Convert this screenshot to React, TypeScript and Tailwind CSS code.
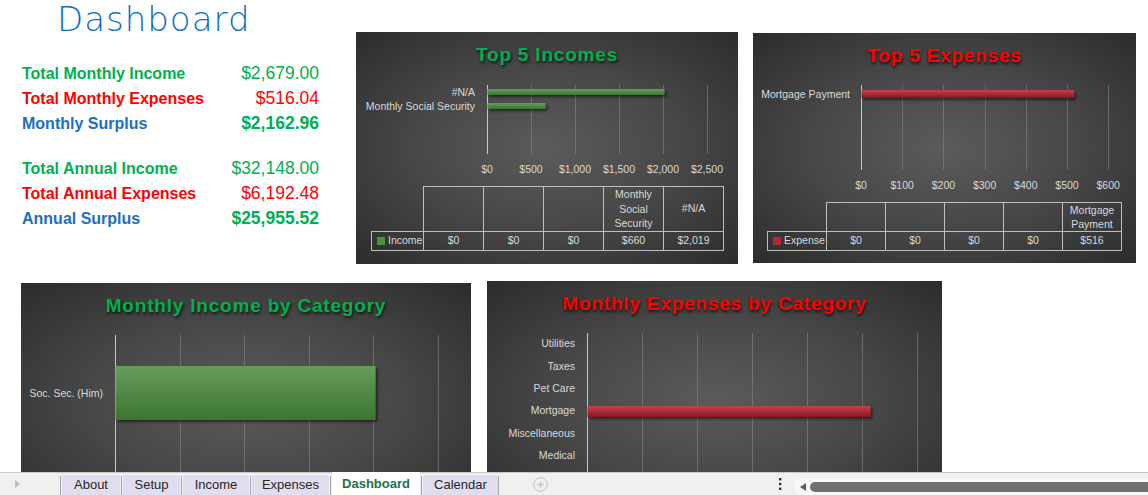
import React from "react";

const SVG_FONT = '"Liberation Sans", Arial, sans-serif';
const LABEL = "#d9d9d9";

function Defs({ id }: { id: string }) {
  return (
    <defs>
      <linearGradient id={`g-${id}`} x1="0" y1="0" x2="0" y2="1">
        <stop offset="0%" stopColor="#679c5d" />
        <stop offset="100%" stopColor="#3c7631" />
      </linearGradient>
      <linearGradient id={`r-${id}`} x1="0" y1="0" x2="0" y2="1">
        <stop offset="0%" stopColor="#c2434f" />
        <stop offset="100%" stopColor="#8c1522" />
      </linearGradient>
      <filter id={`s-${id}`} x="-10%" y="-50%" width="130%" height="250%">
        <feDropShadow dx="2" dy="2" stdDeviation="1.6" floodColor="#000" floodOpacity="0.55" />
      </filter>
    </defs>
  );
}

function Grid({ xs, y1, y2, axis }: { xs: number[]; y1: number; y2: number; axis: number }) {
  return (
    <g>
      {xs.map((x) => (
        <line key={x} x1={Math.round(x) + 0.5} x2={Math.round(x) + 0.5} y1={y1} y2={y2} stroke="#8a8a8a" strokeOpacity="0.55" strokeWidth="1" />
      ))}
      <line x1={axis + 0.5} x2={axis + 0.5} y1={y1} y2={y2} stroke="#c8c8c8" strokeWidth="1" />
    </g>
  );
}

function T({ x, y, children, anchor = "end" }: { x: number; y: number; children: React.ReactNode; anchor?: "end" | "middle" | "start" }) {
  return (
    <text x={x} y={y} textAnchor={anchor} dominantBaseline="central" fontFamily={SVG_FONT} fontSize="10.5" fill={LABEL}>
      {children}
    </text>
  );
}

function Title({ children, color }: { children: React.ReactNode; color: string }) {
  return (
    <div className="h-[47px] shrink-0 flex items-center justify-center">
      <div
        className={`text-[19px] font-bold tracking-[0.8px] ${color} [text-shadow:1px_2px_3px_rgba(0,0,0,0.75)]`}
      >
        {children}
      </div>
    </div>
  );
}

const PANEL =
  "flex flex-col shrink-0 overflow-hidden bg-[radial-gradient(ellipse_at_50%_50%,#5b5b5b_0%,#474747_50%,#2c2c2c_100%)]";

function Legend({ color, label }: { color: string; label: string }) {
  return (
    <div className="flex items-center pl-[5px] gap-[3px]">
      <span className={`inline-block w-[8px] h-[8px] ${color}`} />
      <span>{label}</span>
    </div>
  );
}

const CELL = "border border-[#bfbfbf] text-center font-normal p-0";

function Top5Incomes() {
  const xs = [175, 219, 263, 307, 351];
  const xl = ["$0", "$500", "$1,000", "$1,500", "$2,000", "$2,500"];
  return (
    <div className={`${PANEL} w-[382px] h-[232px] mt-[32px]`}>
      <Title color="text-[#00b050]">Top 5 Incomes</Title>
      <svg width="382" height="107" viewBox="0 47 382 107" className="shrink-0 block">
        <Defs id="a" />
        <Grid xs={xs} y1={53} y2={122} axis={131} />
        <rect x={131.5} y={57} width={177} height={6} fill="url(#g-a)" filter="url(#s-a)" />
        <rect x={131.5} y={71} width={58} height={6} fill="url(#g-a)" filter="url(#s-a)" />
        <T x={119} y={60}>#N/A</T>
        <T x={119} y={74}>Monthly Social Security</T>
        {xl.map((l, i) => (
          <T key={l} x={131 + i * 44} y={137} anchor="middle">
            {l}
          </T>
        ))}
      </svg>
      <table className="ml-[15px] w-[352px] table-fixed border-collapse text-[10.5px] text-[#d9d9d9]">
        <colgroup>
          <col className="w-[52px]" />
          <col className="w-[60px]" />
          <col className="w-[60px]" />
          <col className="w-[60px]" />
          <col className="w-[60px]" />
          <col className="w-[60px]" />
        </colgroup>
        <tbody>
          <tr className="h-[44px]">
            <td className="border-0 p-0" />
            <td className={CELL} />
            <td className={CELL} />
            <td className={CELL} />
            <td className={`${CELL} leading-[14.5px]`}>
              Monthly
              <br />
              Social
              <br />
              Security
            </td>
            <td className={CELL}>#N/A</td>
          </tr>
          <tr className="h-[19px]">
            <td className="border border-[#bfbfbf] p-0">
              <Legend color="bg-[#4e8f44]" label="Income" />
            </td>
            <td className={CELL}>$0</td>
            <td className={CELL}>$0</td>
            <td className={CELL}>$0</td>
            <td className={CELL}>$660</td>
            <td className={CELL}>$2,019</td>
          </tr>
        </tbody>
      </table>
    </div>
  );
}

function Top5Expenses() {
  const xs = [1, 2, 3, 4, 5, 6].map((i) => 108 + i * 41.2);
  const xl = ["$0", "$100", "$200", "$300", "$400", "$500", "$600"];
  return (
    <div className={`${PANEL} w-[383px] h-[230px] mt-[33px] ml-[15px]`}>
      <Title color="text-[#ff0000]">Top 5 Expenses</Title>
      <svg width="383" height="122" viewBox="0 47 383 122" className="shrink-0 block">
        <Defs id="b" />
        <Grid xs={xs} y1={52} y2={137} axis={108} />
        <rect x={108.5} y={57} width={212.6} height={8} fill="url(#r-b)" filter="url(#s-b)" />
        <T x={97} y={61}>Mortgage Payment</T>
        {xl.map((l, i) => (
          <T key={l} x={108 + i * 41.2} y={152} anchor="middle">
            {l}
          </T>
        ))}
      </svg>
      <table className="ml-[14px] w-[354px] table-fixed border-collapse text-[10.5px] text-[#d9d9d9]">
        <colgroup>
          <col className="w-[59px]" />
          <col className="w-[59px]" />
          <col className="w-[59px]" />
          <col className="w-[59px]" />
          <col className="w-[59px]" />
          <col className="w-[59px]" />
        </colgroup>
        <tbody>
          <tr className="h-[29px]">
            <td className="border-0 p-0" />
            <td className={CELL} />
            <td className={CELL} />
            <td className={CELL} />
            <td className={CELL} />
            <td className={`${CELL} leading-[14px]`}>
              Mortgage
              <br />
              Payment
            </td>
          </tr>
          <tr className="h-[19px]">
            <td className="border border-[#bfbfbf] p-0">
              <Legend color="bg-[#b02a38]" label="Expense" />
            </td>
            <td className={CELL}>$0</td>
            <td className={CELL}>$0</td>
            <td className={CELL}>$0</td>
            <td className={CELL}>$0</td>
            <td className={CELL}>$516</td>
          </tr>
        </tbody>
      </table>
    </div>
  );
}

function IncomeByCategory() {
  const xs = [1, 2, 3, 4, 5].map((i) => 94 + i * 64.6);
  return (
    <div className={`${PANEL} w-[450px] h-[237px] mt-[2px] ml-[21px]`}>
      <Title color="text-[#00b050]">Monthly Income by Category</Title>
      <svg width="450" height="190" viewBox="0 47 450 190" className="shrink-0 block">
        <Defs id="c" />
        <Grid xs={xs} y1={52} y2={237} axis={94} />
        <rect x={94.5} y={83} width={260} height={54} fill="url(#g-c)" filter="url(#s-c)" />
        <T x={82} y={110}>Soc. Sec. (Him)</T>
      </svg>
    </div>
  );
}

function ExpensesByCategory() {
  const xs = [1, 2, 3, 4, 5, 6].map((i) => 100 + i * 55);
  const cats: [string, number][] = [
    ["Utilities", 62],
    ["Taxes", 85],
    ["Pet Care", 107],
    ["Mortgage", 129],
    ["Miscellaneous", 152],
    ["Medical", 174],
  ];
  return (
    <div className={`${PANEL} w-[455px] h-[237px] ml-[16px]`}>
      <Title color="text-[#ff0000]">Monthly Expenses by Category</Title>
      <svg width="455" height="190" viewBox="0 47 455 190" className="shrink-0 block">
        <Defs id="d" />
        <Grid xs={xs} y1={52} y2={237} axis={100} />
        <rect x={100.5} y={125} width={283} height={11} fill="url(#r-d)" filter="url(#s-d)" />
        {cats.map(([c, y]) => (
          <T key={c} x={88} y={y}>
            {c}
          </T>
        ))}
      </svg>
    </div>
  );
}

type Row = { label: string; value: string; lc: string; vc: string };

function SummaryRows({ rows }: { rows: Row[] }) {
  return (
    <div className="flex flex-col">
      {rows.map((r) => (
        <div key={r.label} className="h-[25px] flex items-center justify-between">
          <span className={`text-[16px] font-bold ${r.lc}`}>{r.label}</span>
          <span className={`text-[17.5px] ${r.vc}`}>{r.value}</span>
        </div>
      ))}
    </div>
  );
}

function Summary() {
  const green = "text-[#00b050]";
  const red = "text-[#ff0000]";
  const blue = "text-[#1b6ec2]";
  return (
    <div className="w-[356px] shrink-0 pl-[22px] pr-[37px]">
      <div className="h-[61px] pt-[2px] pl-[35px] text-[34px] leading-[35px] font-extralight text-[#0b6fc6] font-['DejaVu_Sans',sans-serif] tracking-[1px]">
        Dashboard
      </div>
      <SummaryRows
        rows={[
          { label: "Total Monthly Income", value: "$2,679.00", lc: green, vc: green },
          { label: "Total Monthly Expenses", value: "$516.04", lc: red, vc: red },
          { label: "Monthly Surplus", value: "$2,162.96", lc: blue, vc: `${green} font-bold` },
        ]}
      />
      <div className="h-[20px]" />
      <SummaryRows
        rows={[
          { label: "Total Annual Income", value: "$32,148.00", lc: green, vc: green },
          { label: "Total Annual Expenses", value: "$6,192.48", lc: red, vc: red },
          { label: "Annual Surplus", value: "$25,955.52", lc: blue, vc: `${green} font-bold` },
        ]}
      />
    </div>
  );
}

function Sep() {
  return (
    <div className="w-[3px] flex justify-center pt-[3px]">
      <div className="w-px bg-[#a8a8a8]" />
    </div>
  );
}

function Tab({ label, w }: { label: string; w: string }) {
  return (
    <div className={`${w} mt-[2px] bg-[#e2ddee] flex items-center justify-center text-[#262626]`}>{label}</div>
  );
}

function TabBar() {
  return (
    <div className="h-[23px] shrink-0 bg-[#f0f0f0] border-t border-[#c6c6c6] flex items-stretch text-[13px]">
      <div className="w-[60px] flex items-center pl-[15px]">
        <svg width="5" height="8" viewBox="0 0 5 8">
          <polygon points="0,0 5,4 0,8" fill="#bdbdbd" />
        </svg>
      </div>
      <div className="w-px bg-[#a8a8a8] mt-[3px]" />
      <div className="w-px" />
      <Tab label="About" w="w-[58px]" />
      <Sep />
      <Tab label="Setup" w="w-[57px]" />
      <Sep />
      <Tab label="Income" w="w-[66px]" />
      <Sep />
      <Tab label="Expenses" w="w-[77px]" />
      <Sep />
      <div className="w-[88px] -mt-px bg-white flex items-center justify-center font-bold text-[#1e7145]">Dashboard</div>
      <Sep />
      <Tab label="Calendar" w="w-[75px]" />
      <div className="w-px bg-[#a8a8a8] mt-[3px]" />
      <div className="ml-[34px] flex items-center">
        <svg width="15" height="15" viewBox="0 0 15 15">
          <circle cx="7.5" cy="7.5" r="6.8" fill="none" stroke="#c4c4c4" strokeWidth="1" />
          <line x1="4" x2="11" y1="7.5" y2="7.5" stroke="#c4c4c4" strokeWidth="1.2" />
          <line x1="7.5" x2="7.5" y1="4" y2="11" stroke="#c4c4c4" strokeWidth="1.2" />
        </svg>
      </div>
      <div className="ml-auto flex items-stretch">
        <div className="w-[20px] flex items-center justify-center">
          <svg width="3" height="12" viewBox="0 0 3 12">
            <rect x="0" y="0" width="2.4" height="2.4" fill="#333" />
            <rect x="0" y="4.8" width="2.4" height="2.4" fill="#333" />
            <rect x="0" y="9.6" width="2.4" height="2.4" fill="#333" />
          </svg>
        </div>
        <div className="w-[4px]" />
        <div className="w-[354px] mt-[5px] bg-[#f8f8f8] rounded-l-[8px] flex items-center pl-[6px] gap-[4px]">
          <svg width="6" height="8" viewBox="0 0 6 8">
            <polygon points="6,0 0,4 6,8" fill="#5e5e5e" />
          </svg>
          <div className="flex-1 h-[10px] bg-[#6f6f6f] rounded-l-[5px]" />
        </div>
      </div>
    </div>
  );
}

export default function App() {
  return (
    <div className="w-[1148px] h-[495px] bg-white overflow-hidden flex flex-col font-['Liberation_Sans',Arial,sans-serif]">
      <div className="h-[472px] shrink-0 overflow-hidden flex flex-col">
        <div className="h-[281px] shrink-0 flex items-start">
          <Summary />
          <Top5Incomes />
          <Top5Expenses />
        </div>
        <div className="flex items-start">
          <IncomeByCategory />
          <ExpensesByCategory />
        </div>
      </div>
      <TabBar />
    </div>
  );
}
